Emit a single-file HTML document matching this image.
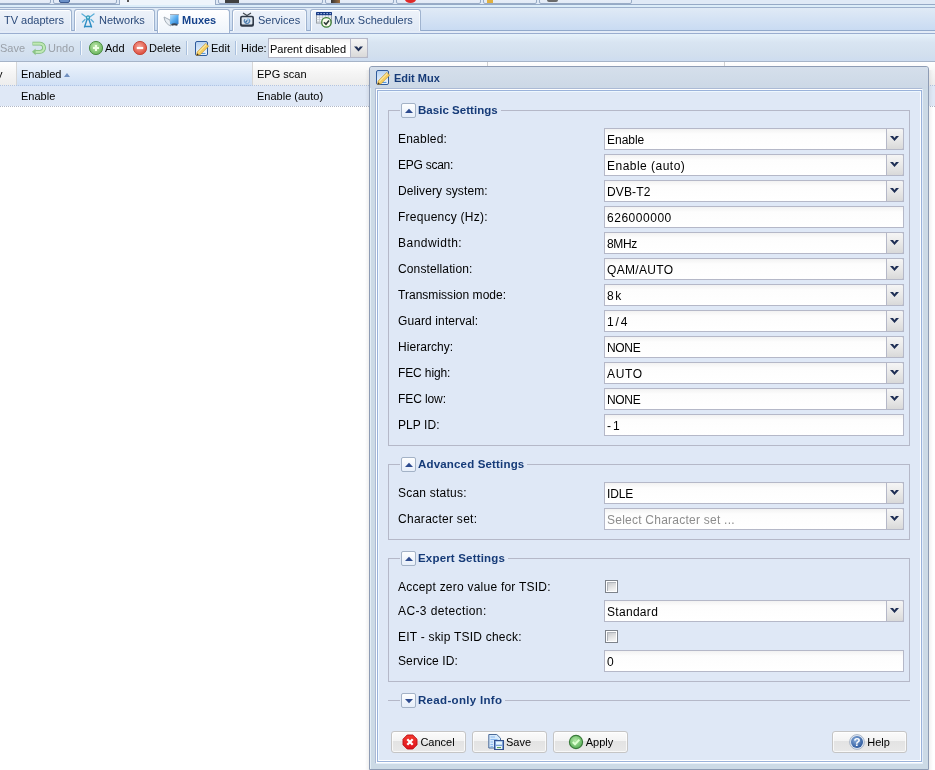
<!DOCTYPE html>
<html><head><meta charset="utf-8"><style>
*{box-sizing:border-box;margin:0;padding:0}
html,body{width:935px;height:770px;overflow:hidden;background:#fff;font-family:"Liberation Sans",sans-serif;font-size:11px;color:#000}
.a{position:absolute}
svg{display:block}
#root{will-change:transform;position:relative;width:935px;height:770px;overflow:hidden;background:#fff}
.tab{height:21px;border:1px solid #9fb3cf;border-bottom:none;border-radius:3px 3px 0 0;background:linear-gradient(#eef3fa,#dfe8f5);box-shadow:inset 1px 1px 0 #fff,inset -1px 0 0 #f4f8fc;color:#15428b;font-size:11px;white-space:nowrap}
.tab.act{height:23px;background:linear-gradient(#ffffff,#eef4fb);font-weight:bold}
.tbt{font-size:11px;white-space:nowrap;color:#000;line-height:13px}
.sep{width:2px;height:14px;border-left:1px solid #a9c0de;border-right:1px solid #f4f8fc}
.gh{font-size:11px;white-space:nowrap;line-height:13px}
.wt{color:#163b78;font-weight:bold;font-size:11px;white-space:nowrap;line-height:13px}
.lgd{background:#dfe8f6;height:16px;white-space:nowrap}
.tg{width:15px;height:15px;border:1px solid #a3b2c6;border-radius:2px;background:linear-gradient(#fdfeff,#e6eef9)}
.lbl{font-size:12px;white-space:nowrap;color:#000;line-height:14px}
.fld{width:300px;height:22px;border:1px solid #b5b8c8;background:linear-gradient(#f2f2f2 0,#fdfdfd 5px,#fff 100%);font-size:12px;line-height:14px;padding:4px 0 0 2px;white-space:nowrap}
.trg{right:-1px;top:-1px;width:18px;height:22px;border:1px solid #b5b8c8;border-radius:0 2px 2px 0;background:linear-gradient(#f5f5f5,#e9e9e9 50%,#d9d9d9)}
.cb{width:13px;height:13px;border:1px solid #7d828a;background:#fff;padding:1px}.cb i{display:block;width:9px;height:9px;background:linear-gradient(160deg,#c2c4c8,#e6e6e6 60%,#f6f6f6);box-shadow:inset 1px 1px 0 #b0b4ba}
.btn{width:75px;height:22px;border:1px solid #c5c5c5;border-radius:3px;background:linear-gradient(#fbfbfb 0,#f3f3f3 45%,#e3e3e3 45%,#e8e8e8 100%);box-shadow:inset 0 0 0 1px rgba(255,255,255,.7);font-size:12px;line-height:14px;white-space:nowrap}
</style></head>
<body><div id="root">
<div class="a" style="left:0;top:0;width:935px;height:5px;background:#dfe9f6"></div>
<div class="a" style="left:-10px;top:-6px;width:61px;height:10px;border:1px solid #99acc6;border-radius:0 0 2px 2px;background:linear-gradient(#edf2fa,#e2eaf6)"></div>
<div class="a" style="left:53px;top:-6px;width:64px;height:10px;border:1px solid #99acc6;border-radius:0 0 2px 2px;background:linear-gradient(#edf2fa,#e2eaf6)"></div>
<div class="a" style="left:119px;top:-6px;width:97px;height:11px;border:1px solid #99acc6;border-bottom:none;background:#eef4fb"></div>
<div class="a" style="left:218px;top:-6px;width:105px;height:10px;border:1px solid #99acc6;border-radius:0 0 2px 2px;background:linear-gradient(#edf2fa,#e2eaf6)"></div>
<div class="a" style="left:325px;top:-6px;width:69px;height:10px;border:1px solid #99acc6;border-radius:0 0 2px 2px;background:linear-gradient(#edf2fa,#e2eaf6)"></div>
<div class="a" style="left:396px;top:-6px;width:85px;height:10px;border:1px solid #99acc6;border-radius:0 0 2px 2px;background:linear-gradient(#edf2fa,#e2eaf6)"></div>
<div class="a" style="left:483px;top:-6px;width:54px;height:10px;border:1px solid #99acc6;border-radius:0 0 2px 2px;background:linear-gradient(#edf2fa,#e2eaf6)"></div>
<div class="a" style="left:539px;top:-6px;width:93px;height:10px;border:1px solid #99acc6;border-radius:0 0 2px 2px;background:linear-gradient(#edf2fa,#e2eaf6)"></div>
<div class="a" style="left:59px;top:-3px;width:11px;height:6px;background:#6a90c8;border:1px solid #3a5a90;border-radius:2px"></div>
<div class="a" style="left:127px;top:0;width:2px;height:2px;background:#555"></div>
<div class="a" style="left:225px;top:0;width:14px;height:3px;background:#404040"></div>
<div class="a" style="left:331px;top:0;width:9px;height:3px;background:linear-gradient(90deg,#333,#a07040)"></div>
<div class="a" style="left:405px;top:-4px;width:11px;height:7px;background:#e02828;border-radius:50%"></div>
<div class="a" style="left:487px;top:0;width:6px;height:3px;background:#e0b040"></div>
<div class="a" style="left:547px;top:0;width:11px;height:2px;background:#6a6a6a;border-radius:0 0 4px 4px"></div>
<div class="a" style="left:0;top:4px;width:119px;height:1px;background:#95a9c6"></div>
<div class="a" style="left:216px;top:4px;width:719px;height:1px;background:#95a9c6"></div>
<div class="a" style="left:0;top:5px;width:935px;height:2px;background:#dcedf9"></div>
<div class="a" style="left:0;top:7px;width:935px;height:1px;background:#9db1cd"></div>
<div class="a" style="left:0;top:8px;width:935px;height:22px;background:linear-gradient(#e0eaf6,#c9dbf2)"></div>
<div class="a" style="left:0;top:30px;width:935px;height:1px;background:#92aacc"></div>
<div class="a" style="left:0;top:31px;width:935px;height:2px;background:#e3ecf8"></div>
<div class="a" style="left:0;top:33px;width:935px;height:2px;background:#9aaed0"></div>
<div class="a tab" style="left:-4px;top:9px;width:76px;height:22px"></div>
<div class="a tab-t" style="left:4px;top:14px;font-size:11px;line-height:13px;color:#2b4a7a;white-space:nowrap">TV adapters</div>
<div class="a tab" style="left:74px;top:9px;width:81px;height:22px"></div>
<div class="a" style="left:80px;top:12px"><svg width="16" height="16"><g fill="none" stroke-linecap="round"><path d="M2 2 L5.5 4.5 M14 2 L10.5 4.5 M2.5 10 L5 7.5 M13.5 10 L11 7.5" stroke="#5aaed8" stroke-width="1.3"/><path d="M7.2 7 L4.5 15 M8.8 7 L11.5 15 M5 14.5 H11" stroke="#2f8ec4" stroke-width="1.4"/><circle cx="8" cy="5.5" r="1.6" stroke="#2f9ab8" stroke-width="1.3" fill="#bff0ff"/></g></svg></div>
<div class="a tab-t" style="left:99px;top:14px;font-size:11px;line-height:13px;color:#2b4a7a;white-space:nowrap">Networks</div>
<div class="a tab act" style="left:157px;top:9px;width:73px;height:24px"></div>
<div class="a" style="left:163px;top:12px"><svg width="16" height="16"><defs><linearGradient id="gm" x1="0" y1="0" x2="1" y2="1"><stop offset="0" stop-color="#bfe2fb"/><stop offset=".5" stop-color="#5aaef0"/><stop offset="1" stop-color="#2a78c8"/></linearGradient></defs><path d="M1 5 Q2 12 8 14 L7 8 Z" fill="#e8eef4" stroke="#9aa4ae" stroke-width=".9"/><rect x="7" y="2" width="9" height="1.3" fill="#a4acb8"/><rect x="7" y="3" width="8.5" height="9" fill="url(#gm)"/><path d="M8.5 13 Q11 11.5 14.5 13" stroke="#3a4656" stroke-width="1.8" fill="none"/></svg></div>
<div class="a tab-t" style="left:182px;top:14px;font-size:11px;line-height:13px;color:#15428b;font-weight:bold;white-space:nowrap">Muxes</div>
<div class="a tab" style="left:232px;top:9px;width:75px;height:22px"></div>
<div class="a" style="left:239px;top:12px"><svg width="16" height="16"><path d="M4 1 L8 3.5 L12 1" stroke="#404850" stroke-width="1.1" fill="none"/><rect x="1" y="3.8" width="14" height="11" rx="2" fill="#303a48"/><rect x="2.6" y="5.2" width="10.8" height="7.2" rx=".8" fill="#dde6ef"/><path d="M6 7.2 A2.6 2.6 0 1 0 10 7.2" stroke="#5a88b8" stroke-width="1.3" fill="none"/><path d="M6.5 10.5 L9.5 7" stroke="#3a6a9a" stroke-width="1.2"/><circle cx="9" cy="7.5" r="1.3" fill="#9cc4e8"/></svg></div>
<div class="a tab-t" style="left:258px;top:14px;font-size:11px;line-height:13px;color:#2b4a7a;white-space:nowrap">Services</div>
<div class="a tab" style="left:310px;top:9px;width:111px;height:22px"></div>
<div class="a" style="left:315px;top:12px"><svg width="16" height="16" style="overflow:visible"><rect x="1.5" y="1" width="15" height="10" fill="#f8fafc" stroke="#9098a0"/><path d="M1.5 5.2 H16.5 M1.5 7.6 H16.5 M1.5 9.8 H16.5 M4.5 3 V11 M7.5 3 V11 M10.5 3 V11 M13.5 3 V11" stroke="#c0c6ce" stroke-width=".8"/><rect x="1" y="0" width="16" height="3.2" rx=".8" fill="#173a86"/><path d="M2.5 1.6 H3.8 M5.5 1.6 H6.8 M8.5 1.6 H9.8 M11.5 1.6 H12.8 M14.5 1.6 H15.8" stroke="#cfe0ff" stroke-width="1"/><circle cx="11.4" cy="10.4" r="4.7" fill="#fbfcee" stroke="#3d7f34" stroke-width="1.3"/><path d="M9 10.2 L11 12.3 L14 8.6" stroke="#2c3838" stroke-width="1.6" fill="none"/></svg></div>
<div class="a tab-t" style="left:334px;top:14px;font-size:11px;line-height:13px;color:#2b4a7a;white-space:nowrap">Mux Schedulers</div>
<div class="a" style="left:0;top:34px;width:935px;height:27px;background:linear-gradient(#e6f2fb,#d9e5f2 30%,#d2dfee 80%,#cddcf0)"></div>
<div class="a" style="left:0;top:61px;width:935px;height:1px;background:#a6b4c8"></div>
<div class="a tbt" style="left:0;top:42px;color:#9aa0a8">Save</div>
<div class="a" style="left:31px;top:41px"><svg width="16" height="16"><path d="M1.5 2.7 H9 A4.05 4.05 0 0 1 9 10.8 H3" stroke="#7cb87a" stroke-width="3.8" fill="none"/><path d="M1.8 2.7 H9 A4.05 4.05 0 0 1 9 10.8 H3" stroke="#bfe8b4" stroke-width="2.2" fill="none"/><path d="M1 10.8 L4.6 7.4 L4.6 14.2 Z" fill="#8cc488"/></svg></div>
<div class="a tbt" style="left:48px;top:42px;color:#9aa0a8">Undo</div>
<div class="a sep" style="left:80px;top:41px"></div>
<div class="a" style="left:88px;top:40px"><svg width="16" height="16"><defs><radialGradient id="ga" cx="45%" cy="40%" r="60%"><stop offset="0" stop-color="#c4ecb4"/><stop offset="1" stop-color="#68b45a"/></radialGradient></defs><circle cx="8" cy="8" r="6.6" fill="url(#ga)" stroke="#4e8e48" stroke-width="1"/><path d="M8 5 V11 M5 8 H11" stroke="#f0ffe6" stroke-width="2"/></svg></div>
<div class="a tbt" style="left:105px;top:42px">Add</div>
<div class="a" style="left:132px;top:40px"><svg width="16" height="16"><defs><radialGradient id="gd" cx="45%" cy="40%" r="60%"><stop offset="0" stop-color="#f8a89c"/><stop offset="1" stop-color="#dc4a3a"/></radialGradient></defs><circle cx="8" cy="8" r="6.6" fill="url(#gd)" stroke="#c44a3c" stroke-width="1"/><path d="M4.8 8 H11.2" stroke="#fff" stroke-width="2.2"/></svg></div>
<div class="a tbt" style="left:149px;top:42px">Delete</div>
<div class="a sep" style="left:186px;top:41px"></div>
<div class="a" style="left:194px;top:40px"><svg width="16" height="16"><defs><linearGradient id="ge" x1="0" y1="0" x2="0" y2="1"><stop offset="0" stop-color="#b4d0f0"/><stop offset="1" stop-color="#f4f9ff"/></linearGradient></defs><rect x="1.5" y="1.5" width="12" height="14" rx="1.5" fill="url(#ge)" stroke="#2f5b9c"/><path d="M4 13.5 H11.5" stroke="#5a9ad8" stroke-width="1.2"/><path d="M3.2 12 L11.8 3.4 L14.6 6.2 L6 14.8 L2.6 15.4 Z" fill="#f5cf62" stroke="#c9952a" stroke-width=".7"/><path d="M4.4 12.2 L12.3 4.3" stroke="#fff3c0" stroke-width="1"/><path d="M2.6 15.4 L3.1 13.2 L4.8 14.9 Z" fill="#3a3020"/></svg></div>
<div class="a tbt" style="left:211px;top:42px">Edit</div>
<div class="a sep" style="left:235px;top:41px"></div>
<div class="a tbt" style="left:241px;top:42px">Hide:</div>
<div class="a fld" style="left:268px;top:38px;width:100px;height:20px;font-size:11px;padding-top:3px;padding-left:1px;letter-spacing:-0.03px">Parent disabled<div class="a trg" style="height:20px;width:18px"><svg width="16" height="18" style="position:absolute;left:0;top:0"><path d="M3 7.5 L6 7.5 L7.5 9.5 L9 7.5 L12 7.5 L7.5 12.5 Z" fill="#1f2f55"/></svg></div></div>
<div class="a" style="left:0;top:62px;width:935px;height:24px;background:linear-gradient(#ffffff,#f4f4f4 50%,#ececec)"></div>
<div class="a" style="left:16px;top:62px;width:236px;height:24px;background:linear-gradient(#eef4fc,#dde9f8 50%,#cfdff5)"></div>
<div class="a" style="left:16px;top:62px;width:1px;height:24px;background:#d6d6d6"></div>
<div class="a" style="left:252px;top:62px;width:1px;height:24px;background:#d6d6d6"></div>
<div class="a gh" style="left:-3px;top:68px">y</div>
<div class="a gh" style="left:21px;top:68px">Enabled</div>
<div class="a" style="left:64px;top:73px;width:0;height:0;border-left:3.5px solid transparent;border-right:3.5px solid transparent;border-bottom:4px solid #6f8fbf"></div>
<div class="a gh" style="left:257px;top:68px">EPG scan</div>
<div class="a" style="left:487px;top:62px;width:1px;height:5px;background:#d0d0d0"></div>
<div class="a" style="left:724px;top:62px;width:1px;height:5px;background:#d0d0d0"></div>
<div class="a" style="left:0;top:86px;width:935px;height:20px;background:#dfe8f6"></div>
<div class="a" style="left:0;top:85px;width:935px;height:1px;border-top:1px dotted #b0c4e4"></div>
<div class="a" style="left:0;top:106px;width:935px;height:1px;border-top:1px dotted #b0b8c8"></div>
<div class="a gh" style="left:21px;top:90px">Enable</div>
<div class="a gh" style="left:257px;top:90px">Enable (auto)</div>
<div class="a" style="left:365px;top:70px;width:4px;height:700px;background:linear-gradient(90deg,rgba(0,0,0,0),rgba(0,0,0,.06))"></div>
<div class="a" style="left:929px;top:70px;width:4px;height:700px;background:linear-gradient(90deg,rgba(0,0,0,.06),rgba(0,0,0,0))"></div>
<div class="a" style="left:369px;top:66px;width:560px;height:704px;border:1px solid #8e9cb4;border-radius:3px 3px 0 0;background:#ccdae6;box-shadow:inset 1px 1px 0 #e4eef6"></div>
<div class="a" style="left:370px;top:67px;width:558px;height:21px;background:linear-gradient(#d5dfeb,#ccd8e6);border-radius:2px 2px 0 0"></div>
<div class="a" style="left:375px;top:69px"><svg width="16" height="16"><defs><linearGradient id="ge" x1="0" y1="0" x2="0" y2="1"><stop offset="0" stop-color="#b4d0f0"/><stop offset="1" stop-color="#f4f9ff"/></linearGradient></defs><rect x="1.5" y="1.5" width="12" height="14" rx="1.5" fill="url(#ge)" stroke="#2f5b9c"/><path d="M4 13.5 H11.5" stroke="#5a9ad8" stroke-width="1.2"/><path d="M3.2 12 L11.8 3.4 L14.6 6.2 L6 14.8 L2.6 15.4 Z" fill="#f5cf62" stroke="#c9952a" stroke-width=".7"/><path d="M4.4 12.2 L12.3 4.3" stroke="#fff3c0" stroke-width="1"/><path d="M2.6 15.4 L3.1 13.2 L4.8 14.9 Z" fill="#3a3020"/></svg></div>
<div class="a wt" style="left:394px;top:72px">Edit Mux</div>
<div class="a" style="left:375px;top:88px;width:548px;height:676px;border-left:1px solid #abbad5;border-top:1px solid #abbad5;border-right:1px solid #e4eefa;border-bottom:1px solid #e4eefa;background:#fff"></div>
<div class="a" style="left:377px;top:90px;width:545px;height:672px;border:1px solid #9ab2da;background:#dfe8f6;box-shadow:inset 1px 1px 0 #eef8ff,inset -1px -1px 0 #fff"></div>
<div class="a" style="left:388px;top:110px;width:522px;height:336px;border:1px solid #b5b8c8"></div>
<div class="a lgd" style="left:400px;top:102px;padding:0 3px 0 1px"><div class="tg" style="display:inline-block;vertical-align:top;margin-top:1px;position:relative"><svg width="15" height="15" style="position:absolute;left:-1px;top:-1px"><path d="M4 10 L8 5.8 L12 10 Z" fill="#2d4b8e"/></svg></div><span class="wt" style="display:inline-block;vertical-align:top;margin:2px 0 0 2px;font-size:11.5px;letter-spacing:0.03px">Basic Settings</span></div>
<div class="a lbl" style="left:398px;top:132px;letter-spacing:0.214px;">Enabled:</div>
<div class="a fld" style="left:604px;top:128px;width:300px;"><span style="letter-spacing:-0.020px;">Enable</span><div class="a trg"><svg width="17" height="22" style="position:absolute;left:0;top:0"><path d="M3 7 L6 7 L7.5 9 L9 7 L12 7 L7.5 12 Z" fill="#1f2f55"/></svg></div></div>
<div class="a lbl" style="left:398px;top:158px;letter-spacing:-0.250px;">EPG scan:</div>
<div class="a fld" style="left:604px;top:154px;width:300px;"><span style="letter-spacing:0.483px;">Enable (auto)</span><div class="a trg"><svg width="17" height="22" style="position:absolute;left:0;top:0"><path d="M3 7 L6 7 L7.5 9 L9 7 L12 7 L7.5 12 Z" fill="#1f2f55"/></svg></div></div>
<div class="a lbl" style="left:398px;top:184px;letter-spacing:0.107px;">Delivery system:</div>
<div class="a fld" style="left:604px;top:180px;width:300px;"><span style="letter-spacing:0.140px;">DVB-T2</span><div class="a trg"><svg width="17" height="22" style="position:absolute;left:0;top:0"><path d="M3 7 L6 7 L7.5 9 L9 7 L12 7 L7.5 12 Z" fill="#1f2f55"/></svg></div></div>
<div class="a lbl" style="left:398px;top:210px;letter-spacing:0.257px;">Frequency (Hz):</div>
<div class="a fld" style="left:604px;top:206px;width:300px;"><span style="letter-spacing:0.525px;">626000000</span></div>
<div class="a lbl" style="left:398px;top:236px;letter-spacing:0.478px;">Bandwidth:</div>
<div class="a fld" style="left:604px;top:232px;width:300px;"><span style="letter-spacing:-0.333px;">8MHz</span><div class="a trg"><svg width="17" height="22" style="position:absolute;left:0;top:0"><path d="M3 7 L6 7 L7.5 9 L9 7 L12 7 L7.5 12 Z" fill="#1f2f55"/></svg></div></div>
<div class="a lbl" style="left:398px;top:262px;letter-spacing:0.123px;">Constellation:</div>
<div class="a fld" style="left:604px;top:258px;width:300px;"><span style="letter-spacing:0.314px;">QAM/AUTO</span><div class="a trg"><svg width="17" height="22" style="position:absolute;left:0;top:0"><path d="M3 7 L6 7 L7.5 9 L9 7 L12 7 L7.5 12 Z" fill="#1f2f55"/></svg></div></div>
<div class="a lbl" style="left:398px;top:288px;letter-spacing:0.029px;">Transmission mode:</div>
<div class="a fld" style="left:604px;top:284px;width:300px;"><span style="letter-spacing:1.500px;">8k</span><div class="a trg"><svg width="17" height="22" style="position:absolute;left:0;top:0"><path d="M3 7 L6 7 L7.5 9 L9 7 L12 7 L7.5 12 Z" fill="#1f2f55"/></svg></div></div>
<div class="a lbl" style="left:398px;top:314px;letter-spacing:0.107px;">Guard interval:</div>
<div class="a fld" style="left:604px;top:310px;width:300px;"><span style="letter-spacing:1.850px;">1/4</span><div class="a trg"><svg width="17" height="22" style="position:absolute;left:0;top:0"><path d="M3 7 L6 7 L7.5 9 L9 7 L12 7 L7.5 12 Z" fill="#1f2f55"/></svg></div></div>
<div class="a lbl" style="left:398px;top:340px;letter-spacing:0.044px;">Hierarchy:</div>
<div class="a fld" style="left:604px;top:336px;width:300px;"><span style="letter-spacing:-0.333px;">NONE</span><div class="a trg"><svg width="17" height="22" style="position:absolute;left:0;top:0"><path d="M3 7 L6 7 L7.5 9 L9 7 L12 7 L7.5 12 Z" fill="#1f2f55"/></svg></div></div>
<div class="a lbl" style="left:398px;top:366px;letter-spacing:-0.125px;">FEC high:</div>
<div class="a fld" style="left:604px;top:362px;width:300px;"><span style="letter-spacing:0.667px;">AUTO</span><div class="a trg"><svg width="17" height="22" style="position:absolute;left:0;top:0"><path d="M3 7 L6 7 L7.5 9 L9 7 L12 7 L7.5 12 Z" fill="#1f2f55"/></svg></div></div>
<div class="a lbl" style="left:398px;top:392px;letter-spacing:-0.100px;">FEC low:</div>
<div class="a fld" style="left:604px;top:388px;width:300px;"><span style="letter-spacing:-0.333px;">NONE</span><div class="a trg"><svg width="17" height="22" style="position:absolute;left:0;top:0"><path d="M3 7 L6 7 L7.5 9 L9 7 L12 7 L7.5 12 Z" fill="#1f2f55"/></svg></div></div>
<div class="a lbl" style="left:398px;top:418px;letter-spacing:0.067px;">PLP ID:</div>
<div class="a fld" style="left:604px;top:414px;width:300px;"><span style="letter-spacing:2.000px;">-1</span></div>
<div class="a" style="left:388px;top:464px;width:522px;height:76px;border:1px solid #b5b8c8"></div>
<div class="a lgd" style="left:400px;top:456px;padding:0 3px 0 1px"><div class="tg" style="display:inline-block;vertical-align:top;margin-top:1px;position:relative"><svg width="15" height="15" style="position:absolute;left:-1px;top:-1px"><path d="M4 10 L8 5.8 L12 10 Z" fill="#2d4b8e"/></svg></div><span class="wt" style="display:inline-block;vertical-align:top;margin:2px 0 0 2px;font-size:11.5px;letter-spacing:0.17px">Advanced Settings</span></div>
<div class="a lbl" style="left:398px;top:486px;letter-spacing:0.227px;">Scan status:</div>
<div class="a fld" style="left:604px;top:482px;width:300px;"><span style="letter-spacing:-0.133px;">IDLE</span><div class="a trg"><svg width="17" height="22" style="position:absolute;left:0;top:0"><path d="M3 7 L6 7 L7.5 9 L9 7 L12 7 L7.5 12 Z" fill="#1f2f55"/></svg></div></div>
<div class="a lbl" style="left:398px;top:512px;letter-spacing:0.285px;">Character set:</div>
<div class="a fld" style="left:604px;top:508px;width:300px;color:#8c8c8c;"><span style="letter-spacing:0.239px;">Select Character set ...</span><div class="a trg"><svg width="17" height="22" style="position:absolute;left:0;top:0"><path d="M3 7 L6 7 L7.5 9 L9 7 L12 7 L7.5 12 Z" fill="#1f2f55"/></svg></div></div>
<div class="a" style="left:388px;top:558px;width:522px;height:124px;border:1px solid #b5b8c8"></div>
<div class="a lgd" style="left:400px;top:550px;padding:0 3px 0 1px"><div class="tg" style="display:inline-block;vertical-align:top;margin-top:1px;position:relative"><svg width="15" height="15" style="position:absolute;left:-1px;top:-1px"><path d="M4 10 L8 5.8 L12 10 Z" fill="#2d4b8e"/></svg></div><span class="wt" style="display:inline-block;vertical-align:top;margin:2px 0 0 2px;font-size:11.5px;letter-spacing:0.18px">Expert Settings</span></div>
<div class="a lbl" style="left:398px;top:580px;letter-spacing:0.231px;">Accept zero value for TSID:</div>
<div class="a cb" style="left:605px;top:580px"><i></i></div>
<div class="a lbl" style="left:398px;top:604px;letter-spacing:0.393px;">AC-3 detection:</div>
<div class="a fld" style="left:604px;top:600px;width:300px;"><span style="letter-spacing:0.300px;">Standard</span><div class="a trg"><svg width="17" height="22" style="position:absolute;left:0;top:0"><path d="M3 7 L6 7 L7.5 9 L9 7 L12 7 L7.5 12 Z" fill="#1f2f55"/></svg></div></div>
<div class="a lbl" style="left:398px;top:630px;letter-spacing:0.219px;">EIT - skip TSID check:</div>
<div class="a cb" style="left:605px;top:630px"><i></i></div>
<div class="a lbl" style="left:398px;top:654px;letter-spacing:0.120px;">Service ID:</div>
<div class="a fld" style="left:604px;top:650px;width:300px;"><span style="">0</span></div>
<div class="a" style="left:388px;top:700px;width:522px;height:1px;background:#b5b8c8"></div>
<div class="a lgd" style="left:400px;top:692px;padding:0 3px 0 1px"><div class="tg" style="display:inline-block;vertical-align:top;margin-top:1px;position:relative"><svg width="15" height="15" style="position:absolute;left:-1px;top:-1px"><path d="M4 6 L8 10.2 L12 6 Z" fill="#2d4b8e"/></svg></div><span class="wt" style="display:inline-block;vertical-align:top;margin:2px 0 0 2px;font-size:11.5px;letter-spacing:0.32px">Read-only Info</span></div>
<div class="a btn" style="left:391px;top:731px;display:flex;justify-content:center;align-items:flex-start;padding-top:2px"><div style="width:16px;height:16px"><svg width="16" height="16"><defs><linearGradient id="gc" x1="0" y1="0" x2="0" y2="1"><stop offset="0" stop-color="#f23a30"/><stop offset="1" stop-color="#e0101a"/></linearGradient></defs><path d="M5.2 1 H10.8 L15 5.2 V10.8 L10.8 15 H5.2 L1 10.8 V5.2 Z" fill="url(#gc)" stroke="#b80c12" stroke-width=".9"/><path d="M5.3 5.3 L10.7 10.7 M10.7 5.3 L5.3 10.7" stroke="#fff" stroke-width="2.3"/></svg></div><span style="font-size:11px;line-height:13px;margin:2px 0 0 2px">Cancel</span></div>
<div class="a btn" style="left:472px;top:731px;display:flex;justify-content:center;align-items:flex-start;padding-top:2px"><div style="width:16px;height:16px"><svg width="16" height="16"><path d="M0.8 0.5 H8.8 L12.5 4.2 V14 H0.8 Z" fill="#d6eafc" stroke="#4a6a98"/><path d="M2.5 3 H7 M2.5 5.5 H9.5 M2.5 8 H5 M2.5 10.5 H5 M2.5 12.5 H5" stroke="#8ab8ee" stroke-width="1.1"/><rect x="6.5" y="6.5" width="9" height="9" fill="#7aa0d8" stroke="#34528e"/><rect x="8" y="7.5" width="6" height="3.2" fill="#e4f6ff"/><rect x="8" y="12" width="6" height="3" fill="#eef6fa"/><path d="M9 13.6 H13" stroke="#4a9a4a" stroke-width="1"/></svg></div><span style="font-size:11px;line-height:13px;margin:2px 0 0 2px">Save</span></div>
<div class="a btn" style="left:553px;top:731px;display:flex;justify-content:center;align-items:flex-start;padding-top:2px"><div style="width:16px;height:16px"><svg width="16" height="16"><defs><radialGradient id="gp" cx="45%" cy="40%" r="60%"><stop offset="0" stop-color="#b4eaa8"/><stop offset="1" stop-color="#5ab05a"/></radialGradient></defs><circle cx="8" cy="8" r="6.6" fill="url(#gp)" stroke="#3a7a3a" stroke-width="1.1"/><path d="M4.8 8 L7 10.2 L11.4 5.6" stroke="#dcffd0" stroke-width="2" fill="none"/></svg></div><span style="font-size:11px;line-height:13px;margin:2px 0 0 2px">Apply</span></div>
<div class="a btn" style="left:832px;top:731px;display:flex;justify-content:center;align-items:flex-start;padding-top:2px"><div style="width:16px;height:16px"><svg width="16" height="16"><defs><radialGradient id="gh" cx="40%" cy="35%" r="65%"><stop offset="0" stop-color="#8aaedc"/><stop offset="1" stop-color="#2e5a9e"/></radialGradient></defs><circle cx="8" cy="8" r="7.4" fill="#dfe8f4" stroke="#9aa8bc" stroke-width=".8"/><circle cx="8" cy="8" r="6" fill="url(#gh)"/><text x="8" y="12.4" font-family="Liberation Sans" font-weight="bold" font-size="11.5" fill="#fff" text-anchor="middle">?</text></svg></div><span style="font-size:11px;line-height:13px;margin:2px 0 0 2px">Help</span></div>
</div></body></html>
